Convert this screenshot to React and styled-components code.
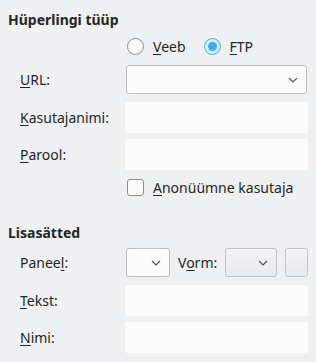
import styled, { createGlobalStyle } from 'styled-components'

const GlobalStyle = createGlobalStyle`
  html, body {
    margin: 0;
    padding: 0;
    background: #eff0f1;
  }
  body {
    font-family: "Noto Sans", "Open Sans", sans-serif;
    font-size: 14px;
    color: #232627;
  }
`

const Page = styled.div`
  width: 316px;
  height: 362px;
  box-sizing: border-box;
  padding: 8px 8px 0 8px;
  display: flex;
  flex-direction: column;
`

const Heading = styled.div`
  font-weight: bold;
  height: 18px;
  line-height: 18px;
  margin-top: ${p => p.$top || 0}px;
`

const Form = styled.div`
  display: grid;
  grid-template-columns: 105px 183px;
  padding-left: 12px;
  margin-top: ${p => p.$top || 0}px;
`

const Label = styled.div`
  display: flex;
  align-items: center;
  height: ${p => p.$h || 31}px;
  margin-top: ${p => p.$gap || 0}px;
  white-space: nowrap;
`

const Cell = styled.div`
  display: flex;
  align-items: center;
  gap: ${p => p.$spacing || 0}px;
  height: ${p => p.$h || 31}px;
  margin-top: ${p => p.$gap || 0}px;
  padding-left: ${p => p.$indent || 0}px;
`

const Input = styled.div`
  width: 183px;
  height: 31px;
  background: #fcfcfc;
  border-radius: 2px;
`

const Combo = styled.div`
  box-sizing: border-box;
  width: ${p => p.$w}px;
  height: 29px;
  border: 1px solid ${p => (p.$flat ? '#c2c4c6' : '#bcbebf')};
  border-radius: 3px;
  background: ${p => (p.$flat ? 'linear-gradient(#f2f3f4, #e9eaeb)' : '#fcfcfc')};
  display: flex;
  align-items: center;
  justify-content: flex-end;
  padding-right: 8px;
  flex-shrink: 0;
`

const Radio = styled.span`
  box-sizing: border-box;
  width: 17px;
  height: 17px;
  border-radius: 50%;
  border: 1px solid ${p => (p.$checked ? '#3daee9' : '#8a8c8e')};
  background: ${p => (p.$checked ? '#d6eefb' : '#fcfcfc')};
  display: inline-flex;
  align-items: center;
  justify-content: center;
  &::after {
    content: '';
    display: ${p => (p.$checked ? 'block' : 'none')};
    width: 9px;
    height: 9px;
    border-radius: 50%;
    background: #3daee9;
  }
`

const Check = styled.span`
  box-sizing: border-box;
  width: 17px;
  height: 17px;
  border-radius: 3px;
  border: 1px solid #8a8c8e;
  background: #fcfcfc;
`

const Option = styled.span`
  display: inline-flex;
  align-items: center;
  gap: 9px;
  margin-right: ${p => p.$mr || 0}px;
`

const Key = styled.u`
  text-decoration: underline;
  text-underline-offset: 2px;
`

const Chevron = () => (
  <svg width="10" height="6" viewBox="0 0 10 6">
    <path d="M1 1l4 4 4-4" fill="none" stroke="#4d4f51" strokeWidth="1.1" />
  </svg>
)

export default function App() {
  return (
    <Page>
      <GlobalStyle />
      <Heading $top={3}>Hüperlingi tüüp</Heading>
      <Form $top={8}>
        <Label $h={18} />
        <Cell $h={18} $indent={2}>
          <Option $mr={18}>
            <Radio />
            <span><Key>V</Key>eeb</span>
          </Option>
          <Option>
            <Radio $checked />
            <span><Key>F</Key>TP</span>
          </Option>
        </Cell>

        <Label $h={29} $gap={10}><span><Key>U</Key>RL:</span></Label>
        <Cell $h={29} $gap={10} $indent={1}>
          <Combo $w={181}><Chevron /></Combo>
        </Cell>

        <Label $gap={8}><span><Key>K</Key>asutajanimi:</span></Label>
        <Cell $gap={8}><Input /></Cell>

        <Label $gap={6}><span><Key>P</Key>arool:</span></Label>
        <Cell $gap={6}><Input /></Cell>

        <Label $h={18} $gap={8} />
        <Cell $h={18} $gap={8} $indent={2}>
          <Option>
            <Check />
            <span><Key>A</Key>nonüümne kasutaja</span>
          </Option>
        </Cell>
      </Form>

      <Heading $top={28}>Lisasätted</Heading>
      <Form $top={6}>
        <Label $h={29}><span>Panee<Key>l</Key>:</span></Label>
        <Cell $h={29} $indent={1} $spacing={8}>
          <Combo $w={44}><Chevron /></Combo>
          <span>V<Key>o</Key>rm:</span>
          <Combo $w={52} $flat><Chevron /></Combo>
          <Combo $w={23} $flat />
        </Cell>

        <Label $gap={8}><span><Key>T</Key>ekst:</span></Label>
        <Cell $gap={8}><Input /></Cell>

        <Label $gap={6}><span><Key>N</Key>imi:</span></Label>
        <Cell $gap={6}><Input /></Cell>
      </Form>
    </Page>
  )
}
